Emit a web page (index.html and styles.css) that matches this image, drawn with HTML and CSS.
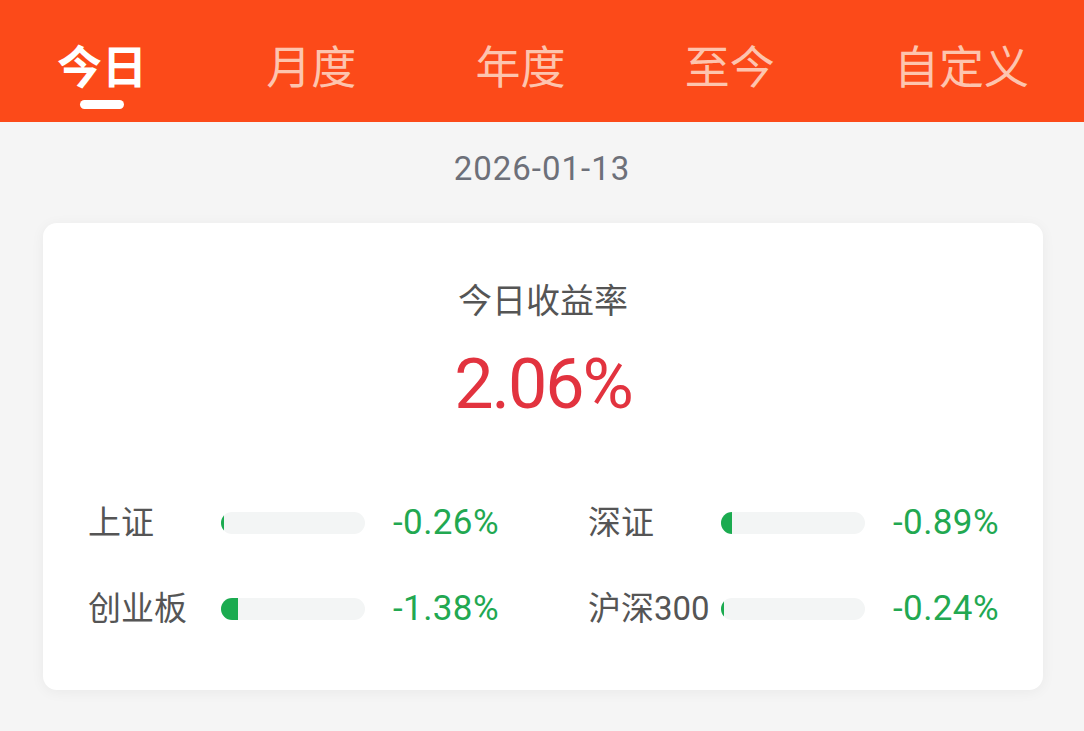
FILE: index.html
```html
<!DOCTYPE html>
<html lang="zh-CN">
<head>
<meta charset="utf-8">
<title>收益率</title>
<link rel="stylesheet" href="styles.css">
</head>
<body>
<header class="tabs">
  <div class="tab active"><span class="tab-text">今日</span><span class="tab-line"></span></div>
  <div class="tab"><span class="tab-text">月度</span></div>
  <div class="tab"><span class="tab-text">年度</span></div>
  <div class="tab"><span class="tab-text">至今</span></div>
  <div class="tab"><span class="tab-text">自定义</span></div>
</header>
<div class="date">2026-01-13</div>
<section class="card">
  <div class="card-title">今日收益率</div>
  <div class="card-value">2.06%</div>
  <div class="grid">
    <div class="item">
      <span class="label">上证</span>
      <span class="bar"><span class="fill" style="width:3px"></span></span>
      <span class="pct">-0.26%</span>
    </div>
    <div class="item">
      <span class="label">深证</span>
      <span class="bar"><span class="fill" style="width:11px"></span></span>
      <span class="pct">-0.89%</span>
    </div>
    <div class="item">
      <span class="label">创业板</span>
      <span class="bar"><span class="fill" style="width:17px"></span></span>
      <span class="pct">-1.38%</span>
    </div>
    <div class="item">
      <span class="label">沪深300</span>
      <span class="bar"><span class="fill" style="width:3px"></span></span>
      <span class="pct">-0.24%</span>
    </div>
  </div>
</section>
</body>
</html>
```

FILE: styles.css
```css
* { box-sizing: border-box; }
html, body {
  margin: 0;
  padding: 0;
}
body {
  width: 1084px;
  height: 731px;
  overflow: hidden;
  background: #f5f5f5;
  font-family: Roboto, "Noto Sans CJK SC", sans-serif;
}
.tabs {
  height: 122px;
  background: #fc4a19;
  display: flex;
  justify-content: space-between;
  align-items: flex-start;
  padding: 40px 55px 0 57px;
}
.tab {
  display: flex;
  flex-direction: column;
  align-items: center;
}
.tab-text {
  font-family: "Noto Sans CJK SC", sans-serif;
  font-size: 45px;
  line-height: 50px;
  color: #fdc4ae;
}
.tab.active .tab-text {
  color: #ffffff;
  font-weight: 700;
}
.tab-line {
  display: block;
  width: 44px;
  height: 9px;
  margin-top: 10px;
  border-radius: 5px;
  background: #ffffff;
}
.date {
  margin-top: 27px;
  text-align: center;
  font-size: 33px;
  line-height: 40px;
  letter-spacing: 1px;
  color: #6d7079;
}
.card {
  margin: 34px 41px 0 43px;
  height: 467px;
  background: #ffffff;
  border-radius: 14px;
  box-shadow: 0 2px 14px rgba(0, 0, 0, 0.05);
  padding: 56px 45px 0 45px;
  display: flex;
  flex-direction: column;
}
.card-title {
  text-align: center;
  font-family: "Noto Sans CJK SC", sans-serif;
  font-size: 34px;
  line-height: 40px;
  color: #555555;
}
.card-value {
  margin-top: 25px;
  text-align: center;
  font-size: 70px;
  line-height: 80px;
  letter-spacing: -2px;
  color: #e2333f;
}
.grid {
  margin-top: 79px;
  display: grid;
  grid-template-columns: 455px 455px;
  column-gap: 45px;
  row-gap: 46px;
}
.item {
  display: flex;
  align-items: center;
  height: 40px;
}
.label {
  width: 133px;
  flex: none;
  font-size: 33px;
  line-height: 40px;
  color: #555555;
  white-space: nowrap;
}
.bar {
  width: 144px;
  height: 22px;
  flex: none;
  border-radius: 11px;
  background: #f3f5f5;
  overflow: hidden;
  display: flex;
}
.fill {
  display: block;
  height: 100%;
  background: #1bab50;
}
.pct {
  margin-left: 28px;
  font-size: 35px;
  line-height: 40px;
  letter-spacing: 0.4px;
  color: #22a851;
}
```
